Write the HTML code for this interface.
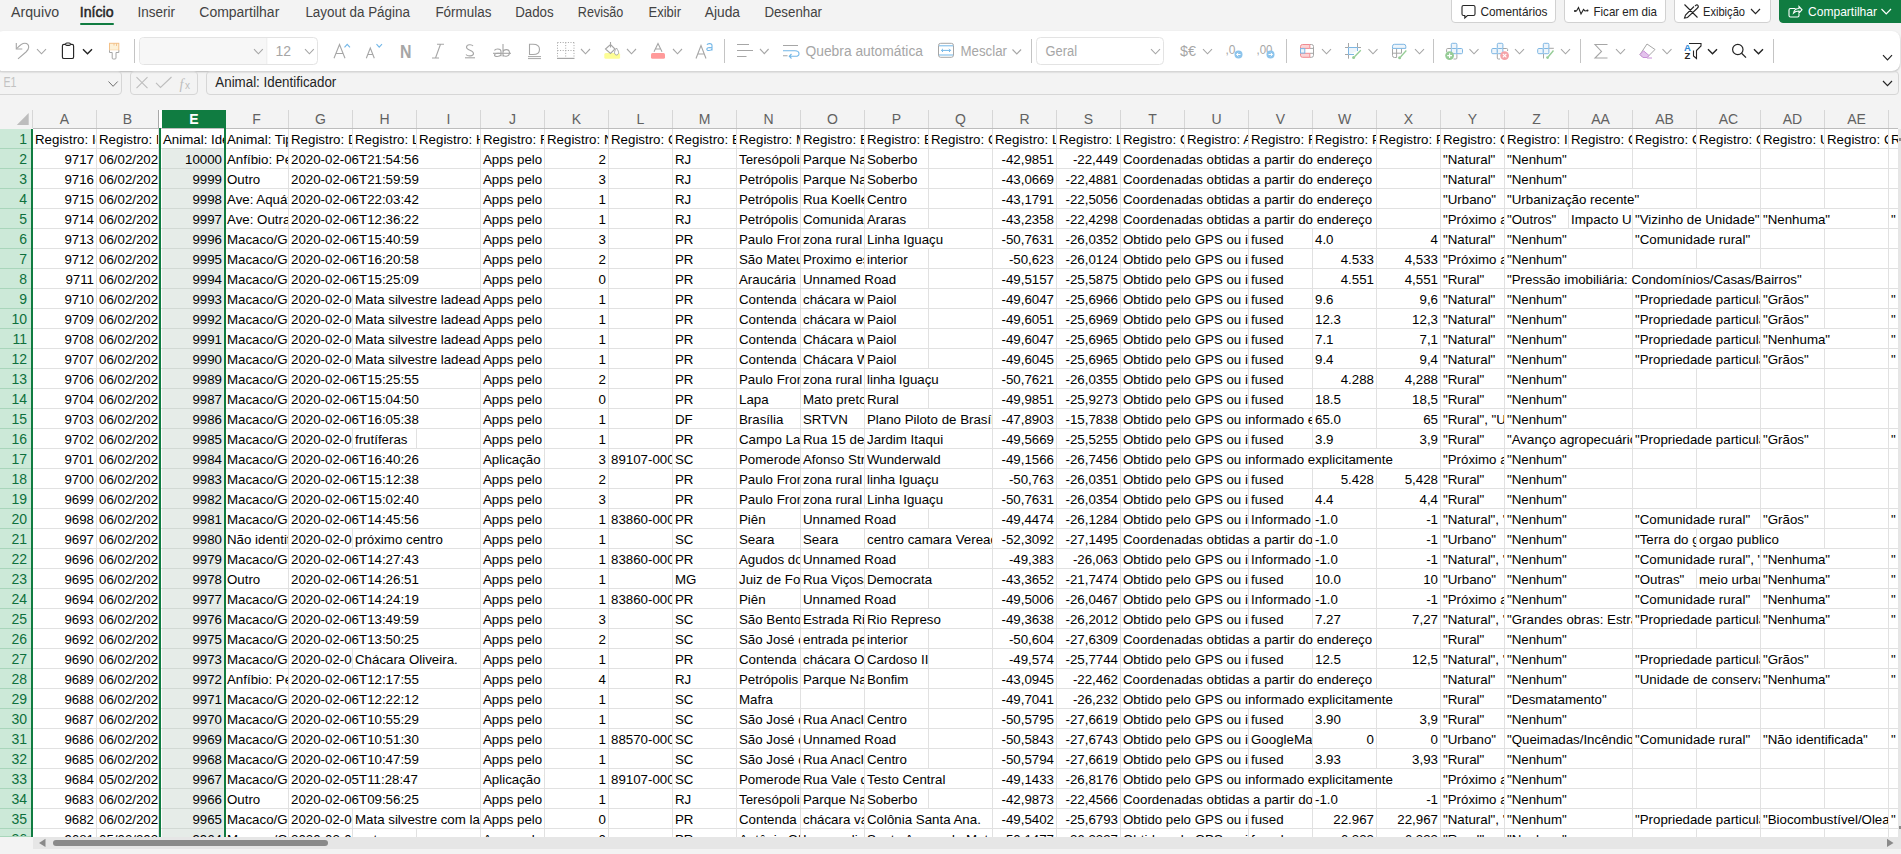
<!DOCTYPE html>
<html><head><meta charset="utf-8">
<style>
*{box-sizing:border-box}
html,body{margin:0;padding:0}
body{width:1901px;height:854px;overflow:hidden;position:relative;background:#f3f3f3;font-family:"Liberation Sans",sans-serif;color:#000}
.abs{position:absolute}
.tab{position:absolute;top:3px;font-size:14px;color:#424242;line-height:18px;white-space:nowrap}
.tab.on{color:#242424;font-weight:bold;letter-spacing:-0.2px}
.uline{position:absolute;left:80px;top:23px;width:34px;height:2px;background:#107c41;border-radius:1px}
.btn{position:absolute;top:-4px;height:27px;border:1px solid #d1d1d1;border-radius:4px;background:#fff;font-size:13.5px;color:#242424;white-space:nowrap}
.btn span{position:absolute;top:7px;line-height:16px}
#tb{position:absolute;left:-5px;top:31px;width:1905px;height:40px;background:#fff;border-radius:8px;box-shadow:0 1px 2px rgba(0,0,0,.25)}
.fbox{position:absolute;border:1px solid #d6d6d6;border-radius:4px}
.hdr{position:absolute;left:0;top:110px;width:1898px;height:18px}
.ch{position:absolute;top:110px;height:18px;line-height:18px;text-align:center;font-size:14px;color:#616161;border-right:1px solid #d6d6d6}
.ch.sel{background:#107c41;color:#fff;font-weight:bold;border-right:0}
.hline{position:absolute;left:33px;top:128px;width:1865px;height:1px;background:#bdbdbd}
.grid{position:absolute;left:33px;top:129px;width:1865px;height:708px;background:#fff}
.hl{position:absolute;left:33px;width:1865px;height:1px;background:#e1e1e1}
.row{position:absolute;left:0;width:1898px;overflow:hidden}
.c{position:absolute;top:0;height:19px;line-height:21px;font-size:13.3px;padding-left:2px;white-space:nowrap;overflow:hidden;border-right:1px solid #e1e1e1}
.c.n{text-align:right;padding-left:0;padding-right:2px}
.c.sel{background:#e6ece8;border-right-color:#fff;box-shadow:inset 1px 0 #fff}
.rh{position:absolute;left:0;width:31px;background:#cce9d8;color:#0e703d;font-size:14px;line-height:21px;overflow:hidden;text-align:right;padding-right:4px;border-bottom:1px solid #a9d6bb}
.rhwrap{position:absolute;left:0;top:129px;width:31px;height:708px;background:#cce9d8}
.selL{position:absolute;left:159px;top:128px;width:2px;height:709px;background:#107c41}
.selR{position:absolute;left:224px;top:128px;width:2px;height:709px;background:#107c41}
.rhline{position:absolute;left:31px;top:129px;width:2px;height:708px;background:#107c41}
</style></head><body>
<div class="btn" style="left:1451px;width:105px"></div>
<div class="btn" style="left:1564px;width:102px"></div>
<div class="btn" style="left:1674px;width:97px"></div>
<div class="btn" style="left:1779px;width:126px;background:#107c41;border-color:#107c41"></div>
<div class="uline"></div>
<div id="tb"></div>
<svg class="abs" style="left:0;top:0" width="1901" height="100" viewBox="0 0 1901 100"><path d="M16.3,43 V49 H22.3" fill="none" stroke="#a6a6a6" stroke-width="1.1"/><path d="M16.8,48.5 C19.5,45.5 22,43.2 24.8,43.2 C27.2,43.2 28.7,44.8 28.7,47.3 C28.7,49.2 27.3,50.8 26,52 L18,58.8" fill="none" stroke="#a6a6a6" stroke-width="1.1"/><polyline points="37,49.2 41.5,53.800000000000004 46,49.2" fill="none" stroke="#a6a6a6" stroke-width="1.1"/><rect x="62.4" y="44.3" width="11.2" height="14.2" rx="1.6" fill="none" stroke="#242424" stroke-width="1.15"/><rect x="65.6" y="43" width="4.8" height="2.4" rx="1.2" fill="#fff" stroke="#242424" stroke-width="1.1"/><polyline points="83,49.2 87.5,53.800000000000004 92,49.2" fill="none" stroke="#242424" stroke-width="1.4"/><rect x="109.5" y="43.3" width="9.3" height="7" fill="#fdf1d8" stroke="#f3c189" stroke-width="1"/><line x1="114" y1="43.3" x2="114" y2="45.5" stroke="#f3c189" stroke-width="0.9"/><line x1="116.5" y1="43.3" x2="116.5" y2="46" stroke="#f3c189" stroke-width="0.9"/><path d="M109.5,50.3 V52.5 H112.2 V58 Q112.2,59 113.2,59 H115 Q116,59 116,58 V52.5 H118.8 V50.3" fill="#fff" stroke="#a6a6a6" stroke-width="1"/><line x1="134.5" y1="39" x2="134.5" y2="63" stroke="#c4c4c4" stroke-width="1"/><rect x="139.5" y="37.5" width="178" height="27" rx="4" fill="#fff" stroke="#e3e3e3" stroke-width="1"/><path d="M143.5,38 H266.5 V64 H143.5 Q140,64 140,60.5 V41.5 Q140,38 143.5,38 Z" fill="#f7f7f7"/><line x1="266.8" y1="38" x2="266.8" y2="64" stroke="#ebebeb"/><polyline points="254,49.2 258.4,53.800000000000004 262.8,49.2" fill="none" stroke="#a6a6a6" stroke-width="1.1"/><text x="275.5" y="56" font-size="14" fill="#a6a6a6" font-family="Liberation Sans">12</text><polyline points="305,49.2 309.4,53.800000000000004 313.8,49.2" fill="none" stroke="#a6a6a6" stroke-width="1.1"/><path d="M334,58.3 L339.5,44.5 L345,58.3 M336,53.5 H343" fill="none" stroke="#a6a6a6" stroke-width="1.1"/><polyline points="344.5,47.3 347.2,44.3 350,47.3" fill="none" stroke="#73b7e8" stroke-width="1.1"/><path d="M366.3,58.3 L370.3,48 L374.3,58.3 M367.8,54.5 H372.8" fill="none" stroke="#a6a6a6" stroke-width="1.1"/><polyline points="376.5,44.2 379.2,47.2 382,44.2" fill="none" stroke="#73b7e8" stroke-width="1.1"/><text x="400" y="58.3" font-size="19" font-weight="bold" fill="#a6a6a6" font-family="Liberation Sans" textLength="11.5" lengthAdjust="spacingAndGlyphs">N</text><path d="M437,44.3 H444 M432,58 H439 M440.5,44.3 L435.5,58" fill="none" stroke="#a6a6a6" stroke-width="1.1"/><path d="M473,46 C472,44.3 466.5,44 466.5,47.3 C466.5,50.5 473.5,50 473.5,53.5 C473.5,56.5 467.5,56.5 466,54.5" fill="none" stroke="#a6a6a6" stroke-width="1.1"/><line x1="465" y1="57.8" x2="475" y2="57.8" stroke="#a6a6a6" stroke-width="1.1"/><path d="M494.5,50.5 C495,48.5 501,48 501,51.5 V56.2 M501,53.5 C497,52.8 494.5,53.5 494.5,55 C494.5,57 499.5,57.2 501,54.8 M503,44 V56.5 M503,52 C503.5,49 509.5,48.5 509.5,52.8 C509.5,57.2 503.5,57 503,54.5" fill="none" stroke="#a6a6a6" stroke-width="1.1"/><line x1="493" y1="53.3" x2="511" y2="53.3" stroke="#a6a6a6" stroke-width="1.1"/><path d="M529.5,44.3 V54.5 H533 C537,54.5 539.5,52.5 539.5,49.4 C539.5,46.3 537,44.3 533,44.3 Z" fill="none" stroke="#a6a6a6" stroke-width="1.1"/><line x1="528" y1="56.6" x2="541" y2="56.6" stroke="#a6a6a6" stroke-width="1"/><line x1="528" y1="58.6" x2="541" y2="58.6" stroke="#a6a6a6" stroke-width="1"/><path d="M557.5,42.5 V58 M574,42.5 V58 M557.5,42.5 H574 M557.5,50.5 H574 M565.7,42.5 V58" fill="none" stroke="#a6a6a6" stroke-width="1" stroke-dasharray="1 1.6"/><line x1="557" y1="58.4" x2="574.5" y2="58.4" stroke="#a6a6a6" stroke-width="1.2"/><polyline points="581,49 585.5,53.8 590,49" fill="none" stroke="#a6a6a6" stroke-width="1.1"/><rect x="604.3" y="53" width="15.8" height="5.8" rx="1.5" fill="#fdfd96"/><path d="M610.5,42 V47.5 M605.5,49 L610.5,44.5 L615,49 L610.5,53.5 Z" fill="none" stroke="#a6a6a6" stroke-width="1.1"/><path d="M616.5,48 C615,50.5 614.5,51.5 614.5,52.6 C614.5,54 615.5,55 616.5,55 C617.5,55 618.6,54 618.6,52.6 C618.6,51.5 618,50.5 616.5,48 Z" fill="#fff" stroke="#a6a6a6" stroke-width="1"/><polyline points="627,49 631.5,53.8 636,49" fill="none" stroke="#a6a6a6" stroke-width="1.1"/><rect x="651" y="53" width="14" height="5.8" rx="1.5" fill="#ff9a9a"/><path d="M654,51.8 L658,43.5 L662,51.8 M655.3,49 H660.7" fill="none" stroke="#a6a6a6" stroke-width="1.1"/><polyline points="673,49 677.5,53.8 682,49" fill="none" stroke="#a6a6a6" stroke-width="1.1"/><path d="M696,58.5 L701,45.5 L706,58.5 M697.8,54 H704.2" fill="none" stroke="#a6a6a6" stroke-width="1.1"/><path d="M707,44.8 C707.5,43.3 712,43 712,45.5 V50.6 M712,47.8 C708.5,47.2 706.8,48 706.8,49.3 C706.8,51 710.8,51 712,49" fill="none" stroke="#73b7e8" stroke-width="1.1"/><line x1="724.5" y1="39" x2="724.5" y2="63" stroke="#c4c4c4" stroke-width="1"/><path d="M737,44.5 H749 M737,50.5 H753 M737,56.5 H746.5" fill="none" stroke="#a6a6a6" stroke-width="1.1"/><polyline points="760,49 764.3,53.6 768.6,49" fill="none" stroke="#a6a6a6" stroke-width="1.1"/><path d="M783,45.5 H798 M783,55.7 H787.5" fill="none" stroke="#a6a6a6" stroke-width="1.1"/><path d="M783,50.7 H795 C797.5,50.7 799,52 799,53.7 C799,55.5 797.5,56.3 795.5,56.3 H789.5 M791.5,54 L789.3,56.3 L791.5,58.5" fill="none" stroke="#73b7e8" stroke-width="1.1"/><text x="805.5" y="55.7" font-size="14" fill="#a6a6a6" font-family="Liberation Sans" textLength="117.5" lengthAdjust="spacingAndGlyphs">Quebra automática</text><rect x="938.5" y="43.3" width="15" height="14" rx="2.2" fill="none" stroke="#a6a6a6" stroke-width="1"/><path d="M939,45.8 H953 M939,55 H953 M941.5,50.4 H950.5 M943,48.8 L941.4,50.4 L943,52 M949,48.8 L950.6,50.4 L949,52" fill="none" stroke="#73b7e8" stroke-width="1"/><text x="960.5" y="55.7" font-size="14" fill="#a6a6a6" font-family="Liberation Sans" textLength="46.5" lengthAdjust="spacingAndGlyphs">Mesclar</text><polyline points="1012.5,49.5 1016.8,53.9 1021.1,49.5" fill="none" stroke="#a6a6a6" stroke-width="1.1"/><line x1="1031.5" y1="39" x2="1031.5" y2="63" stroke="#c4c4c4" stroke-width="1"/><rect x="1036.5" y="37.5" width="127" height="27" rx="4" fill="#fff" stroke="#e3e3e3" stroke-width="1"/><text x="1045.5" y="56" font-size="14" fill="#a6a6a6" font-family="Liberation Sans" textLength="31.5" lengthAdjust="spacingAndGlyphs">Geral</text><polyline points="1151,49.2 1155.5,53.800000000000004 1160,49.2" fill="none" stroke="#a6a6a6" stroke-width="1.1"/><text x="1180" y="56" font-size="14" fill="#a6a6a6" font-family="Liberation Sans" textLength="16" lengthAdjust="spacingAndGlyphs">$€</text><polyline points="1203,49.2 1207.5,53.800000000000004 1212,49.2" fill="none" stroke="#a6a6a6" stroke-width="1.1"/><text x="1225.5" y="53.5" font-size="12" fill="#a6a6a6" font-family="Liberation Sans">,0</text><circle cx="1238.5" cy="54.5" r="4" fill="#8cc4ec"/><path d="M1240.5,54.5 H1236.6 M1238.3,52.8 L1236.6,54.5 L1238.3,56.2" fill="none" stroke="#fff" stroke-width="1"/><text x="1256.5" y="53.5" font-size="12" fill="#a6a6a6" font-family="Liberation Sans" textLength="16" lengthAdjust="spacingAndGlyphs">,00</text><circle cx="1270.5" cy="54.5" r="4" fill="#8cc4ec"/><path d="M1268.5,54.5 H1272.4 M1270.7,52.8 L1272.4,54.5 L1270.7,56.2" fill="none" stroke="#fff" stroke-width="1"/><line x1="1286.5" y1="39" x2="1286.5" y2="63" stroke="#c4c4c4" stroke-width="1"/><path d="M1309.8,44.5 H1311.5 Q1313.5,44.5 1313.5,46.5 V55.3 Q1313.5,57.3 1311.5,57.3 H1309.8 M1309.8,48.4 H1313.5 M1309.8,53.3 H1313.5" fill="none" stroke="#a6a6a6" stroke-width="1"/><path d="M1302.5,44.5 H1309.8 V48.4 H1300.5 V46.5 Q1300.5,44.5 1302.5,44.5 Z" fill="#fbd3d5" stroke="#f08a90" stroke-width="1"/><path d="M1302.5,57.3 H1309.8 V53.3 H1300.5 V55.3 Q1300.5,57.3 1302.5,57.3 Z" fill="#fbd3d5" stroke="#f08a90" stroke-width="1"/><rect x="1300.5" y="48.6" width="4.3" height="4.5" fill="#eef5fb" stroke="#7db6e3" stroke-width="1"/><polyline points="1322,49.2 1326.5,53.800000000000004 1331,49.2" fill="none" stroke="#a6a6a6" stroke-width="1.1"/><path d="M1345,47.5 H1348.5 M1357.5,47.5 H1361 M1345,54.5 H1348.5 M1348.5,43 V47.5 M1348.5,54.5 V58.7 M1357.5,43 V47.5" fill="none" stroke="#a6a6a6" stroke-width="1"/><path d="M1348.5,54.5 V47.5 H1357.5 V51" fill="#eef5fb" stroke="#7db6e3" stroke-width="1"/><path d="M1348.5,54.5 H1354" stroke="#7db6e3" stroke-width="1"/><path d="M1360.8,50.3 L1354.5,56.8" stroke="#96cc96" stroke-width="1.3"/><circle cx="1353.6" cy="57.6" r="1.5" fill="#96cc96"/><polyline points="1368.5,49.2 1373.0,53.800000000000004 1377.5,49.2" fill="none" stroke="#a6a6a6" stroke-width="1.1"/><path d="M1392.5,48.4 V55.5 Q1392.5,57.5 1394.5,57.5 H1396.6 M1392.5,53.2 H1401.5 M1396.6,48.4 V57.5 M1401.5,48.4 V53.2" fill="none" stroke="#a6a6a6" stroke-width="1"/><path d="M1392.5,48.4 V46.3 Q1392.5,44.3 1394.5,44.3 H1403.8 Q1405.8,44.3 1405.8,46.3 V48.4 Z" fill="#eef5fb" stroke="#7db6e3" stroke-width="1"/><path d="M1406.3,50.5 L1400.5,57" stroke="#96cc96" stroke-width="1.3"/><circle cx="1399.6" cy="57.8" r="1.5" fill="#96cc96"/><polyline points="1415,49.2 1419.5,53.800000000000004 1424,49.2" fill="none" stroke="#a6a6a6" stroke-width="1.1"/><line x1="1433.5" y1="39" x2="1433.5" y2="63" stroke="#c4c4c4" stroke-width="1"/><path d="M1451.3,48.5 H1447.6 Q1446.6,48.5 1446.6,49.5 V52 M1456.9,53.7 V58 Q1456.9,59 1455.9,59 H1453.5" fill="none" stroke="#a6a6a6" stroke-width="1"/><rect x="1451.3" y="43.3" width="5.6" height="5.2" rx="1.1" fill="#eef5fb" stroke="#7db6e3" stroke-width="1"/><rect x="1451.3" y="48.5" width="5.6" height="5.2" rx="1.1" fill="#eef5fb" stroke="#7db6e3" stroke-width="1"/><rect x="1456.9" y="48.5" width="5.6" height="5.2" rx="1.1" fill="#eef5fb" stroke="#7db6e3" stroke-width="1"/><circle cx="1449.6" cy="55.6" r="4.4" fill="#96cc96"/><path d="M1449.6,53.2 V58 M1447.2,55.6 H1452" stroke="#fff" stroke-width="1.1"/><polyline points="1469.5,49.2 1474.0,53.800000000000004 1478.5,49.2" fill="none" stroke="#a6a6a6" stroke-width="1.1"/><path d="M1502.9,48.5 H1506.6 Q1507.6,48.5 1507.6,49.5 V51 M1497.3,53.7 V58 Q1497.3,59 1498.3,59 H1500" fill="none" stroke="#a6a6a6" stroke-width="1"/><rect x="1497.3" y="43.3" width="5.6" height="5.2" rx="1.1" fill="#eef5fb" stroke="#7db6e3" stroke-width="1"/><rect x="1491.7" y="48.5" width="5.6" height="5.2" rx="1.1" fill="#eef5fb" stroke="#7db6e3" stroke-width="1"/><rect x="1497.3" y="48.5" width="5.6" height="5.2" rx="1.1" fill="#eef5fb" stroke="#7db6e3" stroke-width="1"/><circle cx="1504.6" cy="55.6" r="4.4" fill="#f4a3a8"/><path d="M1502.8,53.8 L1506.4,57.4 M1506.4,53.8 L1502.8,57.4" stroke="#fff" stroke-width="1.1"/><polyline points="1515,49.2 1519.5,53.800000000000004 1524,49.2" fill="none" stroke="#a6a6a6" stroke-width="1.1"/><path d="M1548.9,48.3 H1553.8 M1543.5,53.7 V58.5" fill="none" stroke="#a6a6a6" stroke-width="1"/><rect x="1543.3" y="43.3" width="5.6" height="5.2" rx="1.1" fill="#eef5fb" stroke="#7db6e3" stroke-width="1"/><rect x="1537.7" y="48.5" width="5.6" height="5.2" rx="1.1" fill="#eef5fb" stroke="#7db6e3" stroke-width="1"/><rect x="1543.3" y="48.5" width="5.6" height="5.2" rx="1.1" fill="#eef5fb" stroke="#7db6e3" stroke-width="1"/><path d="M1553.5,50.5 L1548.3,56.8" stroke="#96cc96" stroke-width="1.4"/><circle cx="1547.6" cy="57.6" r="1.4" fill="#96cc96"/><polyline points="1561,49.2 1565.5,53.800000000000004 1570,49.2" fill="none" stroke="#a6a6a6" stroke-width="1.1"/><line x1="1580.5" y1="39" x2="1580.5" y2="63" stroke="#c4c4c4" stroke-width="1"/><path d="M1607.5,44.5 H1595 L1601.5,51.5 L1595,58 H1607.5" fill="none" stroke="#a6a6a6" stroke-width="1.1"/><polyline points="1616,49.2 1620.5,53.800000000000004 1625,49.2" fill="none" stroke="#a6a6a6" stroke-width="1.1"/><path d="M1647,44 L1655,49.5 L1647,57.5 H1643 L1640,54.5 Z" fill="#fff" stroke="#a6a6a6" stroke-width="1"/><path d="M1640,54.5 L1643.5,50.8 L1649,55.5 L1647,57.5 H1643 Z" fill="#e3c3ec" stroke="#c98fd8" stroke-width="1"/><line x1="1647" y1="58" x2="1652" y2="58" stroke="#c98fd8" stroke-width="1"/><polyline points="1662.5,49.2 1667.0,53.800000000000004 1671.5,49.2" fill="none" stroke="#a6a6a6" stroke-width="1.1"/><text x="1684" y="51" font-size="9.5" fill="#2b88d8" font-family="Liberation Sans" font-weight="bold">A</text><text x="1684.5" y="59" font-size="9.5" fill="#242424" font-family="Liberation Sans" font-weight="bold">Z</text><path d="M1689,43.5 H1701 V46 L1696.5,50.5 V58.5 L1693.5,56 V50.5" fill="none" stroke="#242424" stroke-width="1.1"/><polyline points="1708,49.2 1712.5,53.800000000000004 1717,49.2" fill="none" stroke="#242424" stroke-width="1.4"/><circle cx="1737.8" cy="49.5" r="5.2" fill="none" stroke="#242424" stroke-width="1.2"/><line x1="1741.6" y1="53.3" x2="1746" y2="57.6" stroke="#242424" stroke-width="1.3"/><polyline points="1754,49.2 1758.5,53.800000000000004 1763,49.2" fill="none" stroke="#242424" stroke-width="1.4"/><line x1="1773.5" y1="39" x2="1773.5" y2="63" stroke="#c4c4c4" stroke-width="1"/><polyline points="1883,55.2 1887.5,59.800000000000004 1892,55.2" fill="none" stroke="#242424" stroke-width="1.2"/><polyline points="108.5,81.5 113.1,86.3 117.7,81.5" fill="none" stroke="#707070" stroke-width="1.0"/><path d="M136.5,77.2 L147.5,88.2 M147.5,77.2 L136.5,88.2" stroke="#bdbdbd" stroke-width="1.1"/><path d="M156,82.8 L160.5,87.5 L171.5,77" fill="none" stroke="#bdbdbd" stroke-width="1.1"/><text x="179.5" y="88.5" font-size="14" fill="#bdbdbd" font-family="Liberation Serif" font-style="italic">f</text><text x="185" y="89" font-size="10" fill="#bdbdbd" font-family="Liberation Sans">x</text><polyline points="1883,81 1887.5,85.6 1892,81" fill="none" stroke="#242424" stroke-width="1.2"/><path d="M1463.5,5.5 H1473.5 Q1475,5.5 1475,7 V14 Q1475,15.5 1473.5,15.5 H1467.5 L1464.8,18 V15.5 H1463.5 Q1462,15.5 1462,14 V7 Q1462,5.5 1463.5,5.5 Z" fill="none" stroke="#242424" stroke-width="1.1"/><path d="M1574.5,11 L1576.5,11 L1578.5,7.5 L1581,14 L1583.5,9.5 L1585,11 L1588,10.5" fill="none" stroke="#242424" stroke-width="1.1"/><circle cx="1575" cy="11" r="1" fill="#242424"/><circle cx="1587.5" cy="10.6" r="1" fill="#242424"/><path d="M1684.5,4.5 L1697.5,17.5 M1695,6 Q1697,4 1698,5.5 Q1699,7 1697,8.5 L1687.5,17.5 L1684.5,18 L1685.5,15 L1694,6.5" fill="none" stroke="#242424" stroke-width="1.1"/><polyline points="1751,9 1755.5,13.6 1760,9" fill="none" stroke="#242424" stroke-width="1.2"/><path d="M1795.5,8.5 H1790.5 Q1789,8.5 1789,10 V15.5 Q1789,17 1790.5,17 H1797.5 Q1799,17 1799,15.5 V14 M1793.5,13 Q1794.5,8.5 1799,8.5 V6.5 L1802,9.8 L1799,13 V11 Q1795.5,11 1793.5,13 Z" fill="none" stroke="#fff" stroke-width="1.1"/><polyline points="1881.5,9 1886.25,13.8 1891.0,9" fill="none" stroke="#fff" stroke-width="1.2"/><text x="11.1" y="16.5" font-size="14" fill="#424242" font-family="Liberation Sans" textLength="48" lengthAdjust="spacingAndGlyphs">Arquivo</text><text x="137.4" y="16.5" font-size="14" fill="#424242" font-family="Liberation Sans" textLength="37.5" lengthAdjust="spacingAndGlyphs">Inserir</text><text x="199.3" y="16.5" font-size="14" fill="#424242" font-family="Liberation Sans" textLength="80" lengthAdjust="spacingAndGlyphs">Compartilhar</text><text x="305.4" y="16.5" font-size="14" fill="#424242" font-family="Liberation Sans" textLength="104.6" lengthAdjust="spacingAndGlyphs">Layout da Página</text><text x="435.4" y="16.5" font-size="14" fill="#424242" font-family="Liberation Sans" textLength="56" lengthAdjust="spacingAndGlyphs">Fórmulas</text><text x="515.2" y="16.5" font-size="14" fill="#424242" font-family="Liberation Sans" textLength="38.5" lengthAdjust="spacingAndGlyphs">Dados</text><text x="577.8" y="16.5" font-size="14" fill="#424242" font-family="Liberation Sans" textLength="45.6" lengthAdjust="spacingAndGlyphs">Revisão</text><text x="648.5" y="16.5" font-size="14" fill="#424242" font-family="Liberation Sans" textLength="32.5" lengthAdjust="spacingAndGlyphs">Exibir</text><text x="704.8" y="16.5" font-size="14" fill="#424242" font-family="Liberation Sans" textLength="35.2" lengthAdjust="spacingAndGlyphs">Ajuda</text><text x="764.4" y="16.5" font-size="14" fill="#424242" font-family="Liberation Sans" textLength="57.6" lengthAdjust="spacingAndGlyphs">Desenhar</text><text x="79.8" y="16.5" font-size="14" fill="#242424" font-family="Liberation Sans" textLength="33.8" lengthAdjust="spacingAndGlyphs" stroke="#242424" stroke-width="0.45">Início</text><text x="1480.5" y="15.8" font-size="13" fill="#242424" font-family="Liberation Sans" textLength="67" lengthAdjust="spacingAndGlyphs">Comentários</text><text x="1593.5" y="15.8" font-size="13" fill="#242424" font-family="Liberation Sans" textLength="63.5" lengthAdjust="spacingAndGlyphs">Ficar em dia</text><text x="1703" y="15.8" font-size="13" fill="#242424" font-family="Liberation Sans" textLength="42" lengthAdjust="spacingAndGlyphs">Exibição</text><text x="1808" y="15.8" font-size="13" fill="#ffffff" font-family="Liberation Sans" textLength="69" lengthAdjust="spacingAndGlyphs">Compartilhar</text><text x="215.3" y="87.2" font-size="14" fill="#242424" font-family="Liberation Sans" textLength="121" lengthAdjust="spacingAndGlyphs">Animal: Identificador</text><text x="3.5" y="87.2" font-size="14" fill="#c2c2c2" font-family="Liberation Sans" textLength="13" lengthAdjust="spacingAndGlyphs">E1</text></svg>

<!-- formula bar -->
<div class="fbox" style="left:-4px;top:71px;width:126px;height:24px"></div>
<div class="fbox" style="left:130px;top:71px;width:68px;height:24px"></div>
<div class="fbox" style="left:206px;top:71px;width:1693px;height:24px"></div>

<!-- col headers -->
<div class="ch" style="left:33px;width:64px">A</div>
<div class="ch" style="left:97px;width:62px">B</div>
<div class="ch sel" style="left:162px;width:64px">E</div>
<div class="ch" style="left:225px;width:64px">F</div>
<div class="ch" style="left:289px;width:64px">G</div>
<div class="ch" style="left:353px;width:64px">H</div>
<div class="ch" style="left:417px;width:64px">I</div>
<div class="ch" style="left:481px;width:64px">J</div>
<div class="ch" style="left:545px;width:64px">K</div>
<div class="ch" style="left:609px;width:64px">L</div>
<div class="ch" style="left:673px;width:64px">M</div>
<div class="ch" style="left:737px;width:64px">N</div>
<div class="ch" style="left:801px;width:64px">O</div>
<div class="ch" style="left:865px;width:64px">P</div>
<div class="ch" style="left:929px;width:64px">Q</div>
<div class="ch" style="left:993px;width:64px">R</div>
<div class="ch" style="left:1057px;width:64px">S</div>
<div class="ch" style="left:1121px;width:64px">T</div>
<div class="ch" style="left:1185px;width:64px">U</div>
<div class="ch" style="left:1249px;width:64px">V</div>
<div class="ch" style="left:1313px;width:64px">W</div>
<div class="ch" style="left:1377px;width:64px">X</div>
<div class="ch" style="left:1441px;width:64px">Y</div>
<div class="ch" style="left:1505px;width:64px">Z</div>
<div class="ch" style="left:1569px;width:64px">AA</div>
<div class="ch" style="left:1633px;width:64px">AB</div>
<div class="ch" style="left:1697px;width:64px">AC</div>
<div class="ch" style="left:1761px;width:64px">AD</div>
<div class="ch" style="left:1825px;width:64px">AE</div>
<div class="ch" style="left:1889px;width:9px;border-right:0"></div>
<div class="hline"></div>
<div class="grid"></div>
<div class="hl" style="top:148px"></div>
<div class="hl" style="top:168px"></div>
<div class="hl" style="top:188px"></div>
<div class="hl" style="top:208px"></div>
<div class="hl" style="top:228px"></div>
<div class="hl" style="top:248px"></div>
<div class="hl" style="top:268px"></div>
<div class="hl" style="top:288px"></div>
<div class="hl" style="top:308px"></div>
<div class="hl" style="top:328px"></div>
<div class="hl" style="top:348px"></div>
<div class="hl" style="top:368px"></div>
<div class="hl" style="top:388px"></div>
<div class="hl" style="top:408px"></div>
<div class="hl" style="top:428px"></div>
<div class="hl" style="top:448px"></div>
<div class="hl" style="top:468px"></div>
<div class="hl" style="top:488px"></div>
<div class="hl" style="top:508px"></div>
<div class="hl" style="top:528px"></div>
<div class="hl" style="top:548px"></div>
<div class="hl" style="top:568px"></div>
<div class="hl" style="top:588px"></div>
<div class="hl" style="top:608px"></div>
<div class="hl" style="top:628px"></div>
<div class="hl" style="top:648px"></div>
<div class="hl" style="top:668px"></div>
<div class="hl" style="top:688px"></div>
<div class="hl" style="top:708px"></div>
<div class="hl" style="top:728px"></div>
<div class="hl" style="top:748px"></div>
<div class="hl" style="top:768px"></div>
<div class="hl" style="top:788px"></div>
<div class="hl" style="top:808px"></div>
<div class="hl" style="top:828px"></div>
<div class="row" style="top:129px;height:19px"><div class="c" style="left:33px;width:64px">Registro: Identificador</div><div class="c" style="left:97px;width:62px">Registro: Data</div><div class="c" style="left:161px;width:64px">Animal: Identificador</div><div class="c" style="left:225px;width:64px">Animal: Tipo</div><div class="c" style="left:289px;width:64px">Registro: Data e Hora</div><div class="c" style="left:353px;width:64px">Registro: Local</div><div class="c" style="left:417px;width:64px">Registro: Horário</div><div class="c" style="left:481px;width:64px">Registro: Fonte</div><div class="c" style="left:545px;width:64px">Registro: Número</div><div class="c" style="left:609px;width:64px">Registro: CEP</div><div class="c" style="left:673px;width:64px">Registro: Estado</div><div class="c" style="left:737px;width:64px">Registro: Município</div><div class="c" style="left:801px;width:64px">Registro: Endereço</div><div class="c" style="left:865px;width:64px">Registro: Bairro</div><div class="c" style="left:929px;width:64px">Registro: Complemento</div><div class="c" style="left:993px;width:64px">Registro: Longitude</div><div class="c" style="left:1057px;width:64px">Registro: Latitude</div><div class="c" style="left:1121px;width:64px">Registro: Coordenadas</div><div class="c" style="left:1185px;width:64px">Registro: Acurácia</div><div class="c" style="left:1249px;width:64px">Registro: Fornecedor</div><div class="c" style="left:1313px;width:64px">Registro: Precisão</div><div class="c" style="left:1377px;width:64px">Registro: Precisão</div><div class="c" style="left:1441px;width:64px">Registro: Contexto</div><div class="c" style="left:1505px;width:64px">Registro: Impacto</div><div class="c" style="left:1569px;width:64px">Registro: Complemento</div><div class="c" style="left:1633px;width:64px">Registro: Contexto</div><div class="c" style="left:1697px;width:64px">Registro: Contexto</div><div class="c" style="left:1761px;width:64px">Registro: Uso</div><div class="c" style="left:1825px;width:64px">Registro: Complemento</div><div class="c" style="left:1889px;width:9px;border-right:0">Registro</div></div>
<div class="row" style="top:149px;height:19px"><div class="c n" style="left:33px;width:64px">9717</div><div class="c" style="left:97px;width:62px">06/02/2020</div><div class="c n sel" style="left:161px;width:64px">10000</div><div class="c" style="left:225px;width:64px">Anfíbio: Perereca</div><div class="c" style="left:289px;width:192px">2020-02-06T21:54:56</div><div class="c" style="left:481px;width:64px">Apps pelo celular</div><div class="c n" style="left:545px;width:64px">2</div><div class="c" style="left:609px;width:64px"></div><div class="c" style="left:673px;width:64px">RJ</div><div class="c" style="left:737px;width:64px">Teresópolis</div><div class="c" style="left:801px;width:64px">Parque Nacional</div><div class="c" style="left:865px;width:64px">Soberbo</div><div class="c" style="left:929px;width:64px"></div><div class="c n" style="left:993px;width:64px">-42,9851</div><div class="c n" style="left:1057px;width:64px">-22,449</div><div class="c" style="left:1121px;width:256px">Coordenadas obtidas a partir do endereço</div><div class="c" style="left:1377px;width:64px"></div><div class="c" style="left:1441px;width:64px">"Natural"</div><div class="c" style="left:1505px;width:128px">"Nenhum"</div><div class="c" style="left:1633px;width:64px"></div><div class="c" style="left:1697px;width:64px"></div><div class="c" style="left:1761px;width:64px"></div><div class="c" style="left:1825px;width:64px"></div><div class="c" style="left:1889px;width:9px;border-right:0"></div></div>
<div class="row" style="top:169px;height:19px"><div class="c n" style="left:33px;width:64px">9716</div><div class="c" style="left:97px;width:62px">06/02/2020</div><div class="c n sel" style="left:161px;width:64px">9999</div><div class="c" style="left:225px;width:64px">Outro</div><div class="c" style="left:289px;width:192px">2020-02-06T21:59:59</div><div class="c" style="left:481px;width:64px">Apps pelo celular</div><div class="c n" style="left:545px;width:64px">3</div><div class="c" style="left:609px;width:64px"></div><div class="c" style="left:673px;width:64px">RJ</div><div class="c" style="left:737px;width:64px">Petrópolis</div><div class="c" style="left:801px;width:64px">Parque Nacional</div><div class="c" style="left:865px;width:64px">Soberbo</div><div class="c" style="left:929px;width:64px"></div><div class="c n" style="left:993px;width:64px">-43,0669</div><div class="c n" style="left:1057px;width:64px">-22,4881</div><div class="c" style="left:1121px;width:256px">Coordenadas obtidas a partir do endereço</div><div class="c" style="left:1377px;width:64px"></div><div class="c" style="left:1441px;width:64px">"Natural"</div><div class="c" style="left:1505px;width:128px">"Nenhum"</div><div class="c" style="left:1633px;width:64px"></div><div class="c" style="left:1697px;width:64px"></div><div class="c" style="left:1761px;width:64px"></div><div class="c" style="left:1825px;width:64px"></div><div class="c" style="left:1889px;width:9px;border-right:0"></div></div>
<div class="row" style="top:189px;height:19px"><div class="c n" style="left:33px;width:64px">9715</div><div class="c" style="left:97px;width:62px">06/02/2020</div><div class="c n sel" style="left:161px;width:64px">9998</div><div class="c" style="left:225px;width:64px">Ave: Aquática</div><div class="c" style="left:289px;width:192px">2020-02-06T22:03:42</div><div class="c" style="left:481px;width:64px">Apps pelo celular</div><div class="c n" style="left:545px;width:64px">1</div><div class="c" style="left:609px;width:64px"></div><div class="c" style="left:673px;width:64px">RJ</div><div class="c" style="left:737px;width:64px">Petrópolis</div><div class="c" style="left:801px;width:64px">Rua Koeller</div><div class="c" style="left:865px;width:64px">Centro</div><div class="c" style="left:929px;width:64px"></div><div class="c n" style="left:993px;width:64px">-43,1791</div><div class="c n" style="left:1057px;width:64px">-22,5056</div><div class="c" style="left:1121px;width:256px">Coordenadas obtidas a partir do endereço</div><div class="c" style="left:1377px;width:64px"></div><div class="c" style="left:1441px;width:64px">"Urbano"</div><div class="c" style="left:1505px;width:192px">"Urbanização recente"</div><div class="c" style="left:1697px;width:64px"></div><div class="c" style="left:1761px;width:64px"></div><div class="c" style="left:1825px;width:64px"></div><div class="c" style="left:1889px;width:9px;border-right:0"></div></div>
<div class="row" style="top:209px;height:19px"><div class="c n" style="left:33px;width:64px">9714</div><div class="c" style="left:97px;width:62px">06/02/2020</div><div class="c n sel" style="left:161px;width:64px">9997</div><div class="c" style="left:225px;width:64px">Ave: Outras</div><div class="c" style="left:289px;width:192px">2020-02-06T12:36:22</div><div class="c" style="left:481px;width:64px">Apps pelo celular</div><div class="c n" style="left:545px;width:64px">1</div><div class="c" style="left:609px;width:64px"></div><div class="c" style="left:673px;width:64px">RJ</div><div class="c" style="left:737px;width:64px">Petrópolis</div><div class="c" style="left:801px;width:64px">Comunidade</div><div class="c" style="left:865px;width:64px">Araras</div><div class="c" style="left:929px;width:64px"></div><div class="c n" style="left:993px;width:64px">-43,2358</div><div class="c n" style="left:1057px;width:64px">-22,4298</div><div class="c" style="left:1121px;width:256px">Coordenadas obtidas a partir do endereço</div><div class="c" style="left:1377px;width:64px"></div><div class="c" style="left:1441px;width:64px">"Próximo a Unidade"</div><div class="c" style="left:1505px;width:64px">"Outros"</div><div class="c" style="left:1569px;width:64px">Impacto Urbano</div><div class="c" style="left:1633px;width:128px">"Vizinho de Unidade"</div><div class="c" style="left:1761px;width:128px">"Nenhuma"</div><div class="c" style="left:1889px;width:9px;border-right:0">"</div></div>
<div class="row" style="top:229px;height:19px"><div class="c n" style="left:33px;width:64px">9713</div><div class="c" style="left:97px;width:62px">06/02/2020</div><div class="c n sel" style="left:161px;width:64px">9996</div><div class="c" style="left:225px;width:64px">Macaco/Gorila</div><div class="c" style="left:289px;width:192px">2020-02-06T15:40:59</div><div class="c" style="left:481px;width:64px">Apps pelo celular</div><div class="c n" style="left:545px;width:64px">3</div><div class="c" style="left:609px;width:64px"></div><div class="c" style="left:673px;width:64px">PR</div><div class="c" style="left:737px;width:64px">Paulo Frontin</div><div class="c" style="left:801px;width:64px">zona rural</div><div class="c" style="left:865px;width:128px">Linha Iguaçu</div><div class="c n" style="left:993px;width:64px">-50,7631</div><div class="c n" style="left:1057px;width:64px">-26,0352</div><div class="c" style="left:1121px;width:128px">Obtido pelo GPS ou informado explicitamente</div><div class="c" style="left:1249px;width:64px">fused</div><div class="c" style="left:1313px;width:64px">4.0</div><div class="c n" style="left:1377px;width:64px">4</div><div class="c" style="left:1441px;width:64px">"Natural"</div><div class="c" style="left:1505px;width:128px">"Nenhum"</div><div class="c" style="left:1633px;width:128px">"Comunidade rural"</div><div class="c" style="left:1761px;width:64px"></div><div class="c" style="left:1825px;width:64px"></div><div class="c" style="left:1889px;width:9px;border-right:0"></div></div>
<div class="row" style="top:249px;height:19px"><div class="c n" style="left:33px;width:64px">9712</div><div class="c" style="left:97px;width:62px">06/02/2020</div><div class="c n sel" style="left:161px;width:64px">9995</div><div class="c" style="left:225px;width:64px">Macaco/Gorila</div><div class="c" style="left:289px;width:192px">2020-02-06T16:20:58</div><div class="c" style="left:481px;width:64px">Apps pelo celular</div><div class="c n" style="left:545px;width:64px">2</div><div class="c" style="left:609px;width:64px"></div><div class="c" style="left:673px;width:64px">PR</div><div class="c" style="left:737px;width:64px">São Mateus do Sul</div><div class="c" style="left:801px;width:64px">Proximo escola</div><div class="c" style="left:865px;width:64px">interior</div><div class="c" style="left:929px;width:64px"></div><div class="c n" style="left:993px;width:64px">-50,623</div><div class="c n" style="left:1057px;width:64px">-26,0124</div><div class="c" style="left:1121px;width:128px">Obtido pelo GPS ou informado explicitamente</div><div class="c" style="left:1249px;width:64px">fused</div><div class="c n" style="left:1313px;width:64px">4.533</div><div class="c n" style="left:1377px;width:64px">4,533</div><div class="c" style="left:1441px;width:64px">"Próximo a Unidade"</div><div class="c" style="left:1505px;width:128px">"Nenhum"</div><div class="c" style="left:1633px;width:64px"></div><div class="c" style="left:1697px;width:64px"></div><div class="c" style="left:1761px;width:64px"></div><div class="c" style="left:1825px;width:64px"></div><div class="c" style="left:1889px;width:9px;border-right:0"></div></div>
<div class="row" style="top:269px;height:19px"><div class="c n" style="left:33px;width:64px">9711</div><div class="c" style="left:97px;width:62px">06/02/2020</div><div class="c n sel" style="left:161px;width:64px">9994</div><div class="c" style="left:225px;width:64px">Macaco/Gorila</div><div class="c" style="left:289px;width:192px">2020-02-06T15:25:09</div><div class="c" style="left:481px;width:64px">Apps pelo celular</div><div class="c n" style="left:545px;width:64px">0</div><div class="c" style="left:609px;width:64px"></div><div class="c" style="left:673px;width:64px">PR</div><div class="c" style="left:737px;width:64px">Araucária</div><div class="c" style="left:801px;width:128px">Unnamed Road</div><div class="c" style="left:929px;width:64px"></div><div class="c n" style="left:993px;width:64px">-49,5157</div><div class="c n" style="left:1057px;width:64px">-25,5875</div><div class="c" style="left:1121px;width:128px">Obtido pelo GPS ou informado explicitamente</div><div class="c" style="left:1249px;width:64px">fused</div><div class="c n" style="left:1313px;width:64px">4.551</div><div class="c n" style="left:1377px;width:64px">4,551</div><div class="c" style="left:1441px;width:64px">"Rural"</div><div class="c" style="left:1505px;width:320px">"Pressão imobiliária: Condomínios/Casas/Bairros"</div><div class="c" style="left:1825px;width:64px"></div><div class="c" style="left:1889px;width:9px;border-right:0"></div></div>
<div class="row" style="top:289px;height:19px"><div class="c n" style="left:33px;width:64px">9710</div><div class="c" style="left:97px;width:62px">06/02/2020</div><div class="c n sel" style="left:161px;width:64px">9993</div><div class="c" style="left:225px;width:64px">Macaco/Gorila</div><div class="c" style="left:289px;width:64px">2020-02-06T12:00:00</div><div class="c" style="left:353px;width:128px">Mata silvestre ladeada por</div><div class="c" style="left:481px;width:64px">Apps pelo celular</div><div class="c n" style="left:545px;width:64px">1</div><div class="c" style="left:609px;width:64px"></div><div class="c" style="left:673px;width:64px">PR</div><div class="c" style="left:737px;width:64px">Contenda</div><div class="c" style="left:801px;width:64px">chácara wolf</div><div class="c" style="left:865px;width:64px">Paiol</div><div class="c" style="left:929px;width:64px"></div><div class="c n" style="left:993px;width:64px">-49,6047</div><div class="c n" style="left:1057px;width:64px">-25,6966</div><div class="c" style="left:1121px;width:128px">Obtido pelo GPS ou informado explicitamente</div><div class="c" style="left:1249px;width:64px">fused</div><div class="c" style="left:1313px;width:64px">9.6</div><div class="c n" style="left:1377px;width:64px">9,6</div><div class="c" style="left:1441px;width:64px">"Natural"</div><div class="c" style="left:1505px;width:128px">"Nenhum"</div><div class="c" style="left:1633px;width:128px">"Propriedade particular"</div><div class="c" style="left:1761px;width:64px">"Grãos"</div><div class="c" style="left:1825px;width:64px"></div><div class="c" style="left:1889px;width:9px;border-right:0">"</div></div>
<div class="row" style="top:309px;height:19px"><div class="c n" style="left:33px;width:64px">9709</div><div class="c" style="left:97px;width:62px">06/02/2020</div><div class="c n sel" style="left:161px;width:64px">9992</div><div class="c" style="left:225px;width:64px">Macaco/Gorila</div><div class="c" style="left:289px;width:64px">2020-02-06T12:00:00</div><div class="c" style="left:353px;width:128px">Mata silvestre ladeada por</div><div class="c" style="left:481px;width:64px">Apps pelo celular</div><div class="c n" style="left:545px;width:64px">1</div><div class="c" style="left:609px;width:64px"></div><div class="c" style="left:673px;width:64px">PR</div><div class="c" style="left:737px;width:64px">Contenda</div><div class="c" style="left:801px;width:64px">chácara wolf</div><div class="c" style="left:865px;width:64px">Paiol</div><div class="c" style="left:929px;width:64px"></div><div class="c n" style="left:993px;width:64px">-49,6051</div><div class="c n" style="left:1057px;width:64px">-25,6969</div><div class="c" style="left:1121px;width:128px">Obtido pelo GPS ou informado explicitamente</div><div class="c" style="left:1249px;width:64px">fused</div><div class="c" style="left:1313px;width:64px">12.3</div><div class="c n" style="left:1377px;width:64px">12,3</div><div class="c" style="left:1441px;width:64px">"Natural"</div><div class="c" style="left:1505px;width:128px">"Nenhum"</div><div class="c" style="left:1633px;width:128px">"Propriedade particular"</div><div class="c" style="left:1761px;width:64px">"Grãos"</div><div class="c" style="left:1825px;width:64px"></div><div class="c" style="left:1889px;width:9px;border-right:0">"</div></div>
<div class="row" style="top:329px;height:19px"><div class="c n" style="left:33px;width:64px">9708</div><div class="c" style="left:97px;width:62px">06/02/2020</div><div class="c n sel" style="left:161px;width:64px">9991</div><div class="c" style="left:225px;width:64px">Macaco/Gorila</div><div class="c" style="left:289px;width:64px">2020-02-06T12:00:00</div><div class="c" style="left:353px;width:128px">Mata silvestre ladeada por</div><div class="c" style="left:481px;width:64px">Apps pelo celular</div><div class="c n" style="left:545px;width:64px">1</div><div class="c" style="left:609px;width:64px"></div><div class="c" style="left:673px;width:64px">PR</div><div class="c" style="left:737px;width:64px">Contenda</div><div class="c" style="left:801px;width:64px">Chácara wolf</div><div class="c" style="left:865px;width:64px">Paiol</div><div class="c" style="left:929px;width:64px"></div><div class="c n" style="left:993px;width:64px">-49,6047</div><div class="c n" style="left:1057px;width:64px">-25,6965</div><div class="c" style="left:1121px;width:128px">Obtido pelo GPS ou informado explicitamente</div><div class="c" style="left:1249px;width:64px">fused</div><div class="c" style="left:1313px;width:64px">7.1</div><div class="c n" style="left:1377px;width:64px">7,1</div><div class="c" style="left:1441px;width:64px">"Natural"</div><div class="c" style="left:1505px;width:128px">"Nenhum"</div><div class="c" style="left:1633px;width:128px">"Propriedade particular"</div><div class="c" style="left:1761px;width:128px">"Nenhuma"</div><div class="c" style="left:1889px;width:9px;border-right:0">"</div></div>
<div class="row" style="top:349px;height:19px"><div class="c n" style="left:33px;width:64px">9707</div><div class="c" style="left:97px;width:62px">06/02/2020</div><div class="c n sel" style="left:161px;width:64px">9990</div><div class="c" style="left:225px;width:64px">Macaco/Gorila</div><div class="c" style="left:289px;width:64px">2020-02-06T12:00:00</div><div class="c" style="left:353px;width:128px">Mata silvestre ladeada por</div><div class="c" style="left:481px;width:64px">Apps pelo celular</div><div class="c n" style="left:545px;width:64px">1</div><div class="c" style="left:609px;width:64px"></div><div class="c" style="left:673px;width:64px">PR</div><div class="c" style="left:737px;width:64px">Contenda</div><div class="c" style="left:801px;width:64px">Chácara Wolf</div><div class="c" style="left:865px;width:64px">Paiol</div><div class="c" style="left:929px;width:64px"></div><div class="c n" style="left:993px;width:64px">-49,6045</div><div class="c n" style="left:1057px;width:64px">-25,6965</div><div class="c" style="left:1121px;width:128px">Obtido pelo GPS ou informado explicitamente</div><div class="c" style="left:1249px;width:64px">fused</div><div class="c" style="left:1313px;width:64px">9.4</div><div class="c n" style="left:1377px;width:64px">9,4</div><div class="c" style="left:1441px;width:64px">"Natural"</div><div class="c" style="left:1505px;width:128px">"Nenhum"</div><div class="c" style="left:1633px;width:128px">"Propriedade particular"</div><div class="c" style="left:1761px;width:64px">"Grãos"</div><div class="c" style="left:1825px;width:64px"></div><div class="c" style="left:1889px;width:9px;border-right:0">"</div></div>
<div class="row" style="top:369px;height:19px"><div class="c n" style="left:33px;width:64px">9706</div><div class="c" style="left:97px;width:62px">06/02/2020</div><div class="c n sel" style="left:161px;width:64px">9989</div><div class="c" style="left:225px;width:64px">Macaco/Gorila</div><div class="c" style="left:289px;width:192px">2020-02-06T15:25:55</div><div class="c" style="left:481px;width:64px">Apps pelo celular</div><div class="c n" style="left:545px;width:64px">2</div><div class="c" style="left:609px;width:64px"></div><div class="c" style="left:673px;width:64px">PR</div><div class="c" style="left:737px;width:64px">Paulo Frontin</div><div class="c" style="left:801px;width:64px">zona rural</div><div class="c" style="left:865px;width:128px">linha Iguaçu</div><div class="c n" style="left:993px;width:64px">-50,7621</div><div class="c n" style="left:1057px;width:64px">-26,0355</div><div class="c" style="left:1121px;width:128px">Obtido pelo GPS ou informado explicitamente</div><div class="c" style="left:1249px;width:64px">fused</div><div class="c n" style="left:1313px;width:64px">4.288</div><div class="c n" style="left:1377px;width:64px">4,288</div><div class="c" style="left:1441px;width:64px">"Rural"</div><div class="c" style="left:1505px;width:128px">"Nenhum"</div><div class="c" style="left:1633px;width:64px"></div><div class="c" style="left:1697px;width:64px"></div><div class="c" style="left:1761px;width:64px"></div><div class="c" style="left:1825px;width:64px"></div><div class="c" style="left:1889px;width:9px;border-right:0"></div></div>
<div class="row" style="top:389px;height:19px"><div class="c n" style="left:33px;width:64px">9704</div><div class="c" style="left:97px;width:62px">06/02/2020</div><div class="c n sel" style="left:161px;width:64px">9987</div><div class="c" style="left:225px;width:64px">Macaco/Gorila</div><div class="c" style="left:289px;width:192px">2020-02-06T15:04:50</div><div class="c" style="left:481px;width:64px">Apps pelo celular</div><div class="c n" style="left:545px;width:64px">0</div><div class="c" style="left:609px;width:64px"></div><div class="c" style="left:673px;width:64px">PR</div><div class="c" style="left:737px;width:64px">Lapa</div><div class="c" style="left:801px;width:64px">Mato preto</div><div class="c" style="left:865px;width:64px">Rural</div><div class="c" style="left:929px;width:64px"></div><div class="c n" style="left:993px;width:64px">-49,9851</div><div class="c n" style="left:1057px;width:64px">-25,9273</div><div class="c" style="left:1121px;width:128px">Obtido pelo GPS ou informado explicitamente</div><div class="c" style="left:1249px;width:64px">fused</div><div class="c" style="left:1313px;width:64px">18.5</div><div class="c n" style="left:1377px;width:64px">18,5</div><div class="c" style="left:1441px;width:64px">"Rural"</div><div class="c" style="left:1505px;width:128px">"Nenhum"</div><div class="c" style="left:1633px;width:64px"></div><div class="c" style="left:1697px;width:64px"></div><div class="c" style="left:1761px;width:64px"></div><div class="c" style="left:1825px;width:64px"></div><div class="c" style="left:1889px;width:9px;border-right:0"></div></div>
<div class="row" style="top:409px;height:19px"><div class="c n" style="left:33px;width:64px">9703</div><div class="c" style="left:97px;width:62px">06/02/2020</div><div class="c n sel" style="left:161px;width:64px">9986</div><div class="c" style="left:225px;width:64px">Macaco/Gorila</div><div class="c" style="left:289px;width:192px">2020-02-06T16:05:38</div><div class="c" style="left:481px;width:64px">Apps pelo celular</div><div class="c n" style="left:545px;width:64px">1</div><div class="c" style="left:609px;width:64px"></div><div class="c" style="left:673px;width:64px">DF</div><div class="c" style="left:737px;width:64px">Brasília</div><div class="c" style="left:801px;width:64px">SRTVN</div><div class="c" style="left:865px;width:128px">Plano Piloto de Brasília</div><div class="c n" style="left:993px;width:64px">-47,8903</div><div class="c n" style="left:1057px;width:64px">-15,7838</div><div class="c" style="left:1121px;width:192px">Obtido pelo GPS ou informado explicitamente</div><div class="c" style="left:1313px;width:64px">65.0</div><div class="c n" style="left:1377px;width:64px">65</div><div class="c" style="left:1441px;width:64px">"Rural", "Urbano"</div><div class="c" style="left:1505px;width:128px">"Nenhum"</div><div class="c" style="left:1633px;width:64px"></div><div class="c" style="left:1697px;width:64px"></div><div class="c" style="left:1761px;width:64px"></div><div class="c" style="left:1825px;width:64px"></div><div class="c" style="left:1889px;width:9px;border-right:0"></div></div>
<div class="row" style="top:429px;height:19px"><div class="c n" style="left:33px;width:64px">9702</div><div class="c" style="left:97px;width:62px">06/02/2020</div><div class="c n sel" style="left:161px;width:64px">9985</div><div class="c" style="left:225px;width:64px">Macaco/Gorila</div><div class="c" style="left:289px;width:64px">2020-02-06T12:00:00</div><div class="c" style="left:353px;width:64px">frutíferas</div><div class="c" style="left:417px;width:64px"></div><div class="c" style="left:481px;width:64px">Apps pelo celular</div><div class="c n" style="left:545px;width:64px">1</div><div class="c" style="left:609px;width:64px"></div><div class="c" style="left:673px;width:64px">PR</div><div class="c" style="left:737px;width:64px">Campo Largo</div><div class="c" style="left:801px;width:64px">Rua 15 de Novembro</div><div class="c" style="left:865px;width:128px">Jardim Itaqui</div><div class="c n" style="left:993px;width:64px">-49,5669</div><div class="c n" style="left:1057px;width:64px">-25,5255</div><div class="c" style="left:1121px;width:128px">Obtido pelo GPS ou informado explicitamente</div><div class="c" style="left:1249px;width:64px">fused</div><div class="c" style="left:1313px;width:64px">3.9</div><div class="c n" style="left:1377px;width:64px">3,9</div><div class="c" style="left:1441px;width:64px">"Rural"</div><div class="c" style="left:1505px;width:128px">"Avanço agropecuário"</div><div class="c" style="left:1633px;width:128px">"Propriedade particular"</div><div class="c" style="left:1761px;width:64px">"Grãos"</div><div class="c" style="left:1825px;width:64px"></div><div class="c" style="left:1889px;width:9px;border-right:0">"</div></div>
<div class="row" style="top:449px;height:19px"><div class="c n" style="left:33px;width:64px">9701</div><div class="c" style="left:97px;width:62px">06/02/2020</div><div class="c n sel" style="left:161px;width:64px">9984</div><div class="c" style="left:225px;width:64px">Macaco/Gorila</div><div class="c" style="left:289px;width:192px">2020-02-06T16:40:26</div><div class="c" style="left:481px;width:64px">Aplicação Web</div><div class="c n" style="left:545px;width:64px">3</div><div class="c" style="left:609px;width:64px">89107-000</div><div class="c" style="left:673px;width:64px">SC</div><div class="c" style="left:737px;width:64px">Pomerode</div><div class="c" style="left:801px;width:64px">Afonso Strelow</div><div class="c" style="left:865px;width:128px">Wunderwald</div><div class="c n" style="left:993px;width:64px">-49,1566</div><div class="c n" style="left:1057px;width:64px">-26,7456</div><div class="c" style="left:1121px;width:320px">Obtido pelo GPS ou informado explicitamente</div><div class="c" style="left:1441px;width:64px">"Próximo a Unidade"</div><div class="c" style="left:1505px;width:128px">"Nenhum"</div><div class="c" style="left:1633px;width:64px"></div><div class="c" style="left:1697px;width:64px"></div><div class="c" style="left:1761px;width:64px"></div><div class="c" style="left:1825px;width:64px"></div><div class="c" style="left:1889px;width:9px;border-right:0"></div></div>
<div class="row" style="top:469px;height:19px"><div class="c n" style="left:33px;width:64px">9700</div><div class="c" style="left:97px;width:62px">06/02/2020</div><div class="c n sel" style="left:161px;width:64px">9983</div><div class="c" style="left:225px;width:64px">Macaco/Gorila</div><div class="c" style="left:289px;width:192px">2020-02-06T15:12:38</div><div class="c" style="left:481px;width:64px">Apps pelo celular</div><div class="c n" style="left:545px;width:64px">2</div><div class="c" style="left:609px;width:64px"></div><div class="c" style="left:673px;width:64px">PR</div><div class="c" style="left:737px;width:64px">Paulo Frontin</div><div class="c" style="left:801px;width:64px">zona rural</div><div class="c" style="left:865px;width:128px">linha Iguaçu</div><div class="c n" style="left:993px;width:64px">-50,763</div><div class="c n" style="left:1057px;width:64px">-26,0351</div><div class="c" style="left:1121px;width:128px">Obtido pelo GPS ou informado explicitamente</div><div class="c" style="left:1249px;width:64px">fused</div><div class="c n" style="left:1313px;width:64px">5.428</div><div class="c n" style="left:1377px;width:64px">5,428</div><div class="c" style="left:1441px;width:64px">"Rural"</div><div class="c" style="left:1505px;width:128px">"Nenhum"</div><div class="c" style="left:1633px;width:64px"></div><div class="c" style="left:1697px;width:64px"></div><div class="c" style="left:1761px;width:64px"></div><div class="c" style="left:1825px;width:64px"></div><div class="c" style="left:1889px;width:9px;border-right:0"></div></div>
<div class="row" style="top:489px;height:19px"><div class="c n" style="left:33px;width:64px">9699</div><div class="c" style="left:97px;width:62px">06/02/2020</div><div class="c n sel" style="left:161px;width:64px">9982</div><div class="c" style="left:225px;width:64px">Macaco/Gorila</div><div class="c" style="left:289px;width:192px">2020-02-06T15:02:40</div><div class="c" style="left:481px;width:64px">Apps pelo celular</div><div class="c n" style="left:545px;width:64px">3</div><div class="c" style="left:609px;width:64px"></div><div class="c" style="left:673px;width:64px">PR</div><div class="c" style="left:737px;width:64px">Paulo Frontin</div><div class="c" style="left:801px;width:64px">zona rural</div><div class="c" style="left:865px;width:128px">Linha Iguaçu</div><div class="c n" style="left:993px;width:64px">-50,7631</div><div class="c n" style="left:1057px;width:64px">-26,0354</div><div class="c" style="left:1121px;width:128px">Obtido pelo GPS ou informado explicitamente</div><div class="c" style="left:1249px;width:64px">fused</div><div class="c" style="left:1313px;width:64px">4.4</div><div class="c n" style="left:1377px;width:64px">4,4</div><div class="c" style="left:1441px;width:64px">"Rural"</div><div class="c" style="left:1505px;width:128px">"Nenhum"</div><div class="c" style="left:1633px;width:64px"></div><div class="c" style="left:1697px;width:64px"></div><div class="c" style="left:1761px;width:64px"></div><div class="c" style="left:1825px;width:64px"></div><div class="c" style="left:1889px;width:9px;border-right:0"></div></div>
<div class="row" style="top:509px;height:19px"><div class="c n" style="left:33px;width:64px">9698</div><div class="c" style="left:97px;width:62px">06/02/2020</div><div class="c n sel" style="left:161px;width:64px">9981</div><div class="c" style="left:225px;width:64px">Macaco/Gorila</div><div class="c" style="left:289px;width:192px">2020-02-06T14:45:56</div><div class="c" style="left:481px;width:64px">Apps pelo celular</div><div class="c n" style="left:545px;width:64px">1</div><div class="c" style="left:609px;width:64px">83860-000</div><div class="c" style="left:673px;width:64px">PR</div><div class="c" style="left:737px;width:64px">Piên</div><div class="c" style="left:801px;width:128px">Unnamed Road</div><div class="c" style="left:929px;width:64px"></div><div class="c n" style="left:993px;width:64px">-49,4474</div><div class="c n" style="left:1057px;width:64px">-26,1284</div><div class="c" style="left:1121px;width:128px">Obtido pelo GPS ou informado explicitamente</div><div class="c" style="left:1249px;width:64px">Informado</div><div class="c" style="left:1313px;width:64px">-1.0</div><div class="c n" style="left:1377px;width:64px">-1</div><div class="c" style="left:1441px;width:64px">"Natural", "Rural"</div><div class="c" style="left:1505px;width:128px">"Nenhum"</div><div class="c" style="left:1633px;width:128px">"Comunidade rural"</div><div class="c" style="left:1761px;width:64px">"Grãos"</div><div class="c" style="left:1825px;width:64px"></div><div class="c" style="left:1889px;width:9px;border-right:0">"</div></div>
<div class="row" style="top:529px;height:19px"><div class="c n" style="left:33px;width:64px">9697</div><div class="c" style="left:97px;width:62px">06/02/2020</div><div class="c n sel" style="left:161px;width:64px">9980</div><div class="c" style="left:225px;width:64px">Não identificado</div><div class="c" style="left:289px;width:64px">2020-02-06T12:00:00</div><div class="c" style="left:353px;width:128px">próximo centro</div><div class="c" style="left:481px;width:64px">Apps pelo celular</div><div class="c n" style="left:545px;width:64px">1</div><div class="c" style="left:609px;width:64px"></div><div class="c" style="left:673px;width:64px">SC</div><div class="c" style="left:737px;width:64px">Seara</div><div class="c" style="left:801px;width:64px">Seara</div><div class="c" style="left:865px;width:128px">centro camara Vereadores</div><div class="c n" style="left:993px;width:64px">-52,3092</div><div class="c n" style="left:1057px;width:64px">-27,1495</div><div class="c" style="left:1121px;width:192px">Coordenadas obtidas a partir do endereço</div><div class="c" style="left:1313px;width:64px">-1.0</div><div class="c n" style="left:1377px;width:64px">-1</div><div class="c" style="left:1441px;width:64px">"Urbano"</div><div class="c" style="left:1505px;width:128px">"Nenhum"</div><div class="c" style="left:1633px;width:64px">"Terra do governo"</div><div class="c" style="left:1697px;width:128px">orgao publico</div><div class="c" style="left:1825px;width:64px"></div><div class="c" style="left:1889px;width:9px;border-right:0"></div></div>
<div class="row" style="top:549px;height:19px"><div class="c n" style="left:33px;width:64px">9696</div><div class="c" style="left:97px;width:62px">06/02/2020</div><div class="c n sel" style="left:161px;width:64px">9979</div><div class="c" style="left:225px;width:64px">Macaco/Gorila</div><div class="c" style="left:289px;width:192px">2020-02-06T14:27:43</div><div class="c" style="left:481px;width:64px">Apps pelo celular</div><div class="c n" style="left:545px;width:64px">1</div><div class="c" style="left:609px;width:64px">83860-000</div><div class="c" style="left:673px;width:64px">PR</div><div class="c" style="left:737px;width:64px">Agudos do Sul</div><div class="c" style="left:801px;width:128px">Unnamed Road</div><div class="c" style="left:929px;width:64px"></div><div class="c n" style="left:993px;width:64px">-49,383</div><div class="c n" style="left:1057px;width:64px">-26,063</div><div class="c" style="left:1121px;width:128px">Obtido pelo GPS ou informado explicitamente</div><div class="c" style="left:1249px;width:64px">Informado</div><div class="c" style="left:1313px;width:64px">-1.0</div><div class="c n" style="left:1377px;width:64px">-1</div><div class="c" style="left:1441px;width:64px">"Natural", "Rural"</div><div class="c" style="left:1505px;width:128px">"Nenhum"</div><div class="c" style="left:1633px;width:128px">"Comunidade rural", "Outras"</div><div class="c" style="left:1761px;width:128px">"Nenhuma"</div><div class="c" style="left:1889px;width:9px;border-right:0">"</div></div>
<div class="row" style="top:569px;height:19px"><div class="c n" style="left:33px;width:64px">9695</div><div class="c" style="left:97px;width:62px">06/02/2020</div><div class="c n sel" style="left:161px;width:64px">9978</div><div class="c" style="left:225px;width:64px">Outro</div><div class="c" style="left:289px;width:192px">2020-02-06T14:26:51</div><div class="c" style="left:481px;width:64px">Apps pelo celular</div><div class="c n" style="left:545px;width:64px">1</div><div class="c" style="left:609px;width:64px"></div><div class="c" style="left:673px;width:64px">MG</div><div class="c" style="left:737px;width:64px">Juiz de Fora</div><div class="c" style="left:801px;width:64px">Rua Viçosa</div><div class="c" style="left:865px;width:128px">Democrata</div><div class="c n" style="left:993px;width:64px">-43,3652</div><div class="c n" style="left:1057px;width:64px">-21,7474</div><div class="c" style="left:1121px;width:128px">Obtido pelo GPS ou informado explicitamente</div><div class="c" style="left:1249px;width:64px">fused</div><div class="c" style="left:1313px;width:64px">10.0</div><div class="c n" style="left:1377px;width:64px">10</div><div class="c" style="left:1441px;width:64px">"Urbano"</div><div class="c" style="left:1505px;width:128px">"Nenhum"</div><div class="c" style="left:1633px;width:64px">"Outras"</div><div class="c" style="left:1697px;width:64px">meio urbano</div><div class="c" style="left:1761px;width:128px">"Nenhuma"</div><div class="c" style="left:1889px;width:9px;border-right:0">"</div></div>
<div class="row" style="top:589px;height:19px"><div class="c n" style="left:33px;width:64px">9694</div><div class="c" style="left:97px;width:62px">06/02/2020</div><div class="c n sel" style="left:161px;width:64px">9977</div><div class="c" style="left:225px;width:64px">Macaco/Gorila</div><div class="c" style="left:289px;width:192px">2020-02-06T14:24:19</div><div class="c" style="left:481px;width:64px">Apps pelo celular</div><div class="c n" style="left:545px;width:64px">1</div><div class="c" style="left:609px;width:64px">83860-000</div><div class="c" style="left:673px;width:64px">PR</div><div class="c" style="left:737px;width:64px">Piên</div><div class="c" style="left:801px;width:128px">Unnamed Road</div><div class="c" style="left:929px;width:64px"></div><div class="c n" style="left:993px;width:64px">-49,5006</div><div class="c n" style="left:1057px;width:64px">-26,0467</div><div class="c" style="left:1121px;width:128px">Obtido pelo GPS ou informado explicitamente</div><div class="c" style="left:1249px;width:64px">Informado</div><div class="c" style="left:1313px;width:64px">-1.0</div><div class="c n" style="left:1377px;width:64px">-1</div><div class="c" style="left:1441px;width:64px">"Próximo a Unidade"</div><div class="c" style="left:1505px;width:128px">"Nenhum"</div><div class="c" style="left:1633px;width:128px">"Comunidade rural"</div><div class="c" style="left:1761px;width:128px">"Nenhuma"</div><div class="c" style="left:1889px;width:9px;border-right:0">"</div></div>
<div class="row" style="top:609px;height:19px"><div class="c n" style="left:33px;width:64px">9693</div><div class="c" style="left:97px;width:62px">06/02/2020</div><div class="c n sel" style="left:161px;width:64px">9976</div><div class="c" style="left:225px;width:64px">Macaco/Gorila</div><div class="c" style="left:289px;width:192px">2020-02-06T13:49:59</div><div class="c" style="left:481px;width:64px">Apps pelo celular</div><div class="c n" style="left:545px;width:64px">3</div><div class="c" style="left:609px;width:64px"></div><div class="c" style="left:673px;width:64px">SC</div><div class="c" style="left:737px;width:64px">São Bento do Sul</div><div class="c" style="left:801px;width:64px">Estrada Rio Represo</div><div class="c" style="left:865px;width:128px">Rio Represo</div><div class="c n" style="left:993px;width:64px">-49,3638</div><div class="c n" style="left:1057px;width:64px">-26,2012</div><div class="c" style="left:1121px;width:128px">Obtido pelo GPS ou informado explicitamente</div><div class="c" style="left:1249px;width:64px">fused</div><div class="c" style="left:1313px;width:64px">7.27</div><div class="c n" style="left:1377px;width:64px">7,27</div><div class="c" style="left:1441px;width:64px">"Natural", "Rural"</div><div class="c" style="left:1505px;width:128px">"Grandes obras: Estradas"</div><div class="c" style="left:1633px;width:128px">"Propriedade particular"</div><div class="c" style="left:1761px;width:128px">"Nenhuma"</div><div class="c" style="left:1889px;width:9px;border-right:0">"</div></div>
<div class="row" style="top:629px;height:19px"><div class="c n" style="left:33px;width:64px">9692</div><div class="c" style="left:97px;width:62px">06/02/2020</div><div class="c n sel" style="left:161px;width:64px">9975</div><div class="c" style="left:225px;width:64px">Macaco/Gorila</div><div class="c" style="left:289px;width:192px">2020-02-06T13:50:25</div><div class="c" style="left:481px;width:64px">Apps pelo celular</div><div class="c n" style="left:545px;width:64px">2</div><div class="c" style="left:609px;width:64px"></div><div class="c" style="left:673px;width:64px">SC</div><div class="c" style="left:737px;width:64px">São José do Cerrito</div><div class="c" style="left:801px;width:64px">entrada pelo</div><div class="c" style="left:865px;width:64px">interior</div><div class="c" style="left:929px;width:64px"></div><div class="c n" style="left:993px;width:64px">-50,604</div><div class="c n" style="left:1057px;width:64px">-27,6309</div><div class="c" style="left:1121px;width:256px">Coordenadas obtidas a partir do endereço</div><div class="c" style="left:1377px;width:64px"></div><div class="c" style="left:1441px;width:64px">"Rural"</div><div class="c" style="left:1505px;width:128px">"Nenhum"</div><div class="c" style="left:1633px;width:64px"></div><div class="c" style="left:1697px;width:64px"></div><div class="c" style="left:1761px;width:64px"></div><div class="c" style="left:1825px;width:64px"></div><div class="c" style="left:1889px;width:9px;border-right:0"></div></div>
<div class="row" style="top:649px;height:19px"><div class="c n" style="left:33px;width:64px">9690</div><div class="c" style="left:97px;width:62px">06/02/2020</div><div class="c n sel" style="left:161px;width:64px">9973</div><div class="c" style="left:225px;width:64px">Macaco/Gorila</div><div class="c" style="left:289px;width:64px">2020-02-06T12:00:00</div><div class="c" style="left:353px;width:128px">Chácara Oliveira.</div><div class="c" style="left:481px;width:64px">Apps pelo celular</div><div class="c n" style="left:545px;width:64px">1</div><div class="c" style="left:609px;width:64px"></div><div class="c" style="left:673px;width:64px">PR</div><div class="c" style="left:737px;width:64px">Contenda</div><div class="c" style="left:801px;width:64px">chácara Oliveira</div><div class="c" style="left:865px;width:64px">Cardoso II</div><div class="c" style="left:929px;width:64px"></div><div class="c n" style="left:993px;width:64px">-49,574</div><div class="c n" style="left:1057px;width:64px">-25,7744</div><div class="c" style="left:1121px;width:128px">Obtido pelo GPS ou informado explicitamente</div><div class="c" style="left:1249px;width:64px">fused</div><div class="c" style="left:1313px;width:64px">12.5</div><div class="c n" style="left:1377px;width:64px">12,5</div><div class="c" style="left:1441px;width:64px">"Natural", "Rural"</div><div class="c" style="left:1505px;width:128px">"Nenhum"</div><div class="c" style="left:1633px;width:128px">"Propriedade particular"</div><div class="c" style="left:1761px;width:64px">"Grãos"</div><div class="c" style="left:1825px;width:64px"></div><div class="c" style="left:1889px;width:9px;border-right:0">"</div></div>
<div class="row" style="top:669px;height:19px"><div class="c n" style="left:33px;width:64px">9689</div><div class="c" style="left:97px;width:62px">06/02/2020</div><div class="c n sel" style="left:161px;width:64px">9972</div><div class="c" style="left:225px;width:64px">Anfíbio: Perereca</div><div class="c" style="left:289px;width:192px">2020-02-06T12:17:55</div><div class="c" style="left:481px;width:64px">Apps pelo celular</div><div class="c n" style="left:545px;width:64px">4</div><div class="c" style="left:609px;width:64px"></div><div class="c" style="left:673px;width:64px">RJ</div><div class="c" style="left:737px;width:64px">Petrópolis</div><div class="c" style="left:801px;width:64px">Parque Nacional</div><div class="c" style="left:865px;width:64px">Bonfim</div><div class="c" style="left:929px;width:64px"></div><div class="c n" style="left:993px;width:64px">-43,0945</div><div class="c n" style="left:1057px;width:64px">-22,462</div><div class="c" style="left:1121px;width:256px">Coordenadas obtidas a partir do endereço</div><div class="c" style="left:1377px;width:64px"></div><div class="c" style="left:1441px;width:64px">"Natural"</div><div class="c" style="left:1505px;width:128px">"Nenhum"</div><div class="c" style="left:1633px;width:128px">"Unidade de conservação"</div><div class="c" style="left:1761px;width:128px">"Nenhuma"</div><div class="c" style="left:1889px;width:9px;border-right:0">"</div></div>
<div class="row" style="top:689px;height:19px"><div class="c n" style="left:33px;width:64px">9688</div><div class="c" style="left:97px;width:62px">06/02/2020</div><div class="c n sel" style="left:161px;width:64px">9971</div><div class="c" style="left:225px;width:64px">Macaco/Gorila</div><div class="c" style="left:289px;width:192px">2020-02-06T12:22:12</div><div class="c" style="left:481px;width:64px">Apps pelo celular</div><div class="c n" style="left:545px;width:64px">1</div><div class="c" style="left:609px;width:64px"></div><div class="c" style="left:673px;width:64px">SC</div><div class="c" style="left:737px;width:64px">Mafra</div><div class="c" style="left:801px;width:64px"></div><div class="c" style="left:865px;width:64px"></div><div class="c" style="left:929px;width:64px"></div><div class="c n" style="left:993px;width:64px">-49,7041</div><div class="c n" style="left:1057px;width:64px">-26,232</div><div class="c" style="left:1121px;width:320px">Obtido pelo GPS ou informado explicitamente</div><div class="c" style="left:1441px;width:64px">"Rural"</div><div class="c" style="left:1505px;width:128px">"Desmatamento"</div><div class="c" style="left:1633px;width:64px"></div><div class="c" style="left:1697px;width:64px"></div><div class="c" style="left:1761px;width:64px"></div><div class="c" style="left:1825px;width:64px"></div><div class="c" style="left:1889px;width:9px;border-right:0"></div></div>
<div class="row" style="top:709px;height:19px"><div class="c n" style="left:33px;width:64px">9687</div><div class="c" style="left:97px;width:62px">06/02/2020</div><div class="c n sel" style="left:161px;width:64px">9970</div><div class="c" style="left:225px;width:64px">Macaco/Gorila</div><div class="c" style="left:289px;width:192px">2020-02-06T10:55:29</div><div class="c" style="left:481px;width:64px">Apps pelo celular</div><div class="c n" style="left:545px;width:64px">1</div><div class="c" style="left:609px;width:64px"></div><div class="c" style="left:673px;width:64px">SC</div><div class="c" style="left:737px;width:64px">São José dos Pinhais</div><div class="c" style="left:801px;width:64px">Rua Anacleto</div><div class="c" style="left:865px;width:64px">Centro</div><div class="c" style="left:929px;width:64px"></div><div class="c n" style="left:993px;width:64px">-50,5795</div><div class="c n" style="left:1057px;width:64px">-27,6619</div><div class="c" style="left:1121px;width:128px">Obtido pelo GPS ou informado explicitamente</div><div class="c" style="left:1249px;width:64px">fused</div><div class="c" style="left:1313px;width:64px">3.90</div><div class="c n" style="left:1377px;width:64px">3,9</div><div class="c" style="left:1441px;width:64px">"Rural"</div><div class="c" style="left:1505px;width:128px">"Nenhum"</div><div class="c" style="left:1633px;width:64px"></div><div class="c" style="left:1697px;width:64px"></div><div class="c" style="left:1761px;width:64px"></div><div class="c" style="left:1825px;width:64px"></div><div class="c" style="left:1889px;width:9px;border-right:0"></div></div>
<div class="row" style="top:729px;height:19px"><div class="c n" style="left:33px;width:64px">9686</div><div class="c" style="left:97px;width:62px">06/02/2020</div><div class="c n sel" style="left:161px;width:64px">9969</div><div class="c" style="left:225px;width:64px">Macaco/Gorila</div><div class="c" style="left:289px;width:192px">2020-02-06T10:51:30</div><div class="c" style="left:481px;width:64px">Apps pelo celular</div><div class="c n" style="left:545px;width:64px">1</div><div class="c" style="left:609px;width:64px">88570-000</div><div class="c" style="left:673px;width:64px">SC</div><div class="c" style="left:737px;width:64px">São José dos Pinhais</div><div class="c" style="left:801px;width:128px">Unnamed Road</div><div class="c" style="left:929px;width:64px"></div><div class="c n" style="left:993px;width:64px">-50,5843</div><div class="c n" style="left:1057px;width:64px">-27,6743</div><div class="c" style="left:1121px;width:128px">Obtido pelo GPS ou informado explicitamente</div><div class="c" style="left:1249px;width:64px">GoogleMaps</div><div class="c n" style="left:1313px;width:64px">0</div><div class="c n" style="left:1377px;width:64px">0</div><div class="c" style="left:1441px;width:64px">"Urbano"</div><div class="c" style="left:1505px;width:128px">"Queimadas/Incêndios"</div><div class="c" style="left:1633px;width:128px">"Comunidade rural"</div><div class="c" style="left:1761px;width:128px">"Não identificada"</div><div class="c" style="left:1889px;width:9px;border-right:0">"</div></div>
<div class="row" style="top:749px;height:19px"><div class="c n" style="left:33px;width:64px">9685</div><div class="c" style="left:97px;width:62px">06/02/2020</div><div class="c n sel" style="left:161px;width:64px">9968</div><div class="c" style="left:225px;width:64px">Macaco/Gorila</div><div class="c" style="left:289px;width:192px">2020-02-06T10:47:59</div><div class="c" style="left:481px;width:64px">Apps pelo celular</div><div class="c n" style="left:545px;width:64px">1</div><div class="c" style="left:609px;width:64px"></div><div class="c" style="left:673px;width:64px">SC</div><div class="c" style="left:737px;width:64px">São José dos Pinhais</div><div class="c" style="left:801px;width:64px">Rua Anacleto</div><div class="c" style="left:865px;width:64px">Centro</div><div class="c" style="left:929px;width:64px"></div><div class="c n" style="left:993px;width:64px">-50,5794</div><div class="c n" style="left:1057px;width:64px">-27,6619</div><div class="c" style="left:1121px;width:128px">Obtido pelo GPS ou informado explicitamente</div><div class="c" style="left:1249px;width:64px">fused</div><div class="c" style="left:1313px;width:64px">3.93</div><div class="c n" style="left:1377px;width:64px">3,93</div><div class="c" style="left:1441px;width:64px">"Rural"</div><div class="c" style="left:1505px;width:128px">"Nenhum"</div><div class="c" style="left:1633px;width:64px"></div><div class="c" style="left:1697px;width:64px"></div><div class="c" style="left:1761px;width:64px"></div><div class="c" style="left:1825px;width:64px"></div><div class="c" style="left:1889px;width:9px;border-right:0"></div></div>
<div class="row" style="top:769px;height:19px"><div class="c n" style="left:33px;width:64px">9684</div><div class="c" style="left:97px;width:62px">05/02/2020</div><div class="c n sel" style="left:161px;width:64px">9967</div><div class="c" style="left:225px;width:64px">Macaco/Gorila</div><div class="c" style="left:289px;width:192px">2020-02-05T11:28:47</div><div class="c" style="left:481px;width:64px">Aplicação Web</div><div class="c n" style="left:545px;width:64px">1</div><div class="c" style="left:609px;width:64px">89107-000</div><div class="c" style="left:673px;width:64px">SC</div><div class="c" style="left:737px;width:64px">Pomerode</div><div class="c" style="left:801px;width:64px">Rua Vale do Selke</div><div class="c" style="left:865px;width:128px">Testo Central</div><div class="c n" style="left:993px;width:64px">-49,1433</div><div class="c n" style="left:1057px;width:64px">-26,8176</div><div class="c" style="left:1121px;width:320px">Obtido pelo GPS ou informado explicitamente</div><div class="c" style="left:1441px;width:64px">"Próximo a Unidade"</div><div class="c" style="left:1505px;width:128px">"Nenhum"</div><div class="c" style="left:1633px;width:64px"></div><div class="c" style="left:1697px;width:64px"></div><div class="c" style="left:1761px;width:64px"></div><div class="c" style="left:1825px;width:64px"></div><div class="c" style="left:1889px;width:9px;border-right:0"></div></div>
<div class="row" style="top:789px;height:19px"><div class="c n" style="left:33px;width:64px">9683</div><div class="c" style="left:97px;width:62px">06/02/2020</div><div class="c n sel" style="left:161px;width:64px">9966</div><div class="c" style="left:225px;width:64px">Outro</div><div class="c" style="left:289px;width:192px">2020-02-06T09:56:25</div><div class="c" style="left:481px;width:64px">Apps pelo celular</div><div class="c n" style="left:545px;width:64px">1</div><div class="c" style="left:609px;width:64px"></div><div class="c" style="left:673px;width:64px">RJ</div><div class="c" style="left:737px;width:64px">Teresópolis</div><div class="c" style="left:801px;width:64px">Parque Nacional</div><div class="c" style="left:865px;width:64px">Soberbo</div><div class="c" style="left:929px;width:64px"></div><div class="c n" style="left:993px;width:64px">-42,9873</div><div class="c n" style="left:1057px;width:64px">-22,4566</div><div class="c" style="left:1121px;width:192px">Coordenadas obtidas a partir do endereço</div><div class="c" style="left:1313px;width:64px">-1.0</div><div class="c n" style="left:1377px;width:64px">-1</div><div class="c" style="left:1441px;width:64px">"Próximo a Unidade"</div><div class="c" style="left:1505px;width:128px">"Nenhum"</div><div class="c" style="left:1633px;width:64px"></div><div class="c" style="left:1697px;width:64px"></div><div class="c" style="left:1761px;width:64px"></div><div class="c" style="left:1825px;width:64px"></div><div class="c" style="left:1889px;width:9px;border-right:0"></div></div>
<div class="row" style="top:809px;height:19px"><div class="c n" style="left:33px;width:64px">9682</div><div class="c" style="left:97px;width:62px">06/02/2020</div><div class="c n sel" style="left:161px;width:64px">9965</div><div class="c" style="left:225px;width:64px">Macaco/Gorila</div><div class="c" style="left:289px;width:64px">2020-02-06T12:00:00</div><div class="c" style="left:353px;width:128px">Mata silvestre com lago</div><div class="c" style="left:481px;width:64px">Apps pelo celular</div><div class="c n" style="left:545px;width:64px">0</div><div class="c" style="left:609px;width:64px"></div><div class="c" style="left:673px;width:64px">PR</div><div class="c" style="left:737px;width:64px">Contenda</div><div class="c" style="left:801px;width:64px">chácara vale</div><div class="c" style="left:865px;width:128px">Colônia Santa Ana.</div><div class="c n" style="left:993px;width:64px">-49,5402</div><div class="c n" style="left:1057px;width:64px">-25,6793</div><div class="c" style="left:1121px;width:128px">Obtido pelo GPS ou informado explicitamente</div><div class="c" style="left:1249px;width:64px">fused</div><div class="c n" style="left:1313px;width:64px">22.967</div><div class="c n" style="left:1377px;width:64px">22,967</div><div class="c" style="left:1441px;width:64px">"Natural", "Rural"</div><div class="c" style="left:1505px;width:128px">"Nenhum"</div><div class="c" style="left:1633px;width:128px">"Propriedade particular"</div><div class="c" style="left:1761px;width:128px">"Biocombustível/Oleaginosas"</div><div class="c" style="left:1889px;width:9px;border-right:0">"</div></div>
<div class="row" style="top:829px;height:8px"><div class="c n" style="left:33px;width:64px">9681</div><div class="c" style="left:97px;width:62px">05/02/2020</div><div class="c n sel" style="left:161px;width:64px">9964</div><div class="c" style="left:225px;width:64px">Macaco/Gorila</div><div class="c" style="left:289px;width:64px">2020-02-05T12:00:00</div><div class="c" style="left:353px;width:64px">mata</div><div class="c" style="left:417px;width:64px"></div><div class="c" style="left:481px;width:64px">Apps pelo celular</div><div class="c n" style="left:545px;width:64px">0</div><div class="c" style="left:609px;width:64px"></div><div class="c" style="left:673px;width:64px">PR</div><div class="c" style="left:737px;width:64px">Antônio Olinto</div><div class="c" style="left:801px;width:64px">Invernadinha</div><div class="c" style="left:865px;width:128px">Santo Amaro da Mata</div><div class="c n" style="left:993px;width:64px">-50,1477</div><div class="c n" style="left:1057px;width:64px">-26,3337</div><div class="c" style="left:1121px;width:128px">Obtido pelo GPS ou informado explicitamente</div><div class="c" style="left:1249px;width:64px">fused</div><div class="c n" style="left:1313px;width:64px">6.333</div><div class="c n" style="left:1377px;width:64px">6,333</div><div class="c" style="left:1441px;width:64px">"Rural"</div><div class="c" style="left:1505px;width:128px">"Nenhum"</div><div class="c" style="left:1633px;width:64px"></div><div class="c" style="left:1697px;width:64px"></div><div class="c" style="left:1761px;width:64px"></div><div class="c" style="left:1825px;width:64px"></div><div class="c" style="left:1889px;width:9px;border-right:0"></div></div>
<div class="rhwrap"></div>
<div class="rh" style="top:129px;height:20px">1</div>
<div class="rh" style="top:149px;height:20px">2</div>
<div class="rh" style="top:169px;height:20px">3</div>
<div class="rh" style="top:189px;height:20px">4</div>
<div class="rh" style="top:209px;height:20px">5</div>
<div class="rh" style="top:229px;height:20px">6</div>
<div class="rh" style="top:249px;height:20px">7</div>
<div class="rh" style="top:269px;height:20px">8</div>
<div class="rh" style="top:289px;height:20px">9</div>
<div class="rh" style="top:309px;height:20px">10</div>
<div class="rh" style="top:329px;height:20px">11</div>
<div class="rh" style="top:349px;height:20px">12</div>
<div class="rh" style="top:369px;height:20px">13</div>
<div class="rh" style="top:389px;height:20px">14</div>
<div class="rh" style="top:409px;height:20px">15</div>
<div class="rh" style="top:429px;height:20px">16</div>
<div class="rh" style="top:449px;height:20px">17</div>
<div class="rh" style="top:469px;height:20px">18</div>
<div class="rh" style="top:489px;height:20px">19</div>
<div class="rh" style="top:509px;height:20px">20</div>
<div class="rh" style="top:529px;height:20px">21</div>
<div class="rh" style="top:549px;height:20px">22</div>
<div class="rh" style="top:569px;height:20px">23</div>
<div class="rh" style="top:589px;height:20px">24</div>
<div class="rh" style="top:609px;height:20px">25</div>
<div class="rh" style="top:629px;height:20px">26</div>
<div class="rh" style="top:649px;height:20px">27</div>
<div class="rh" style="top:669px;height:20px">28</div>
<div class="rh" style="top:689px;height:20px">29</div>
<div class="rh" style="top:709px;height:20px">30</div>
<div class="rh" style="top:729px;height:20px">31</div>
<div class="rh" style="top:749px;height:20px">32</div>
<div class="rh" style="top:769px;height:20px">33</div>
<div class="rh" style="top:789px;height:20px">34</div>
<div class="rh" style="top:809px;height:20px">35</div>
<div class="rh" style="top:829px;height:8px">36</div>
<div class="rhline"></div>
<div class="selL"></div>
<div class="abs" style="left:162px;top:148px;width:61px;height:1px;background:#d2d9d4"></div><div class="abs" style="left:162px;top:168px;width:61px;height:1px;background:#d2d9d4"></div><div class="abs" style="left:162px;top:188px;width:61px;height:1px;background:#d2d9d4"></div><div class="abs" style="left:162px;top:208px;width:61px;height:1px;background:#d2d9d4"></div><div class="abs" style="left:162px;top:228px;width:61px;height:1px;background:#d2d9d4"></div><div class="abs" style="left:162px;top:248px;width:61px;height:1px;background:#d2d9d4"></div><div class="abs" style="left:162px;top:268px;width:61px;height:1px;background:#d2d9d4"></div><div class="abs" style="left:162px;top:288px;width:61px;height:1px;background:#d2d9d4"></div><div class="abs" style="left:162px;top:308px;width:61px;height:1px;background:#d2d9d4"></div><div class="abs" style="left:162px;top:328px;width:61px;height:1px;background:#d2d9d4"></div><div class="abs" style="left:162px;top:348px;width:61px;height:1px;background:#d2d9d4"></div><div class="abs" style="left:162px;top:368px;width:61px;height:1px;background:#d2d9d4"></div><div class="abs" style="left:162px;top:388px;width:61px;height:1px;background:#d2d9d4"></div><div class="abs" style="left:162px;top:408px;width:61px;height:1px;background:#d2d9d4"></div><div class="abs" style="left:162px;top:428px;width:61px;height:1px;background:#d2d9d4"></div><div class="abs" style="left:162px;top:448px;width:61px;height:1px;background:#d2d9d4"></div><div class="abs" style="left:162px;top:468px;width:61px;height:1px;background:#d2d9d4"></div><div class="abs" style="left:162px;top:488px;width:61px;height:1px;background:#d2d9d4"></div><div class="abs" style="left:162px;top:508px;width:61px;height:1px;background:#d2d9d4"></div><div class="abs" style="left:162px;top:528px;width:61px;height:1px;background:#d2d9d4"></div><div class="abs" style="left:162px;top:548px;width:61px;height:1px;background:#d2d9d4"></div><div class="abs" style="left:162px;top:568px;width:61px;height:1px;background:#d2d9d4"></div><div class="abs" style="left:162px;top:588px;width:61px;height:1px;background:#d2d9d4"></div><div class="abs" style="left:162px;top:608px;width:61px;height:1px;background:#d2d9d4"></div><div class="abs" style="left:162px;top:628px;width:61px;height:1px;background:#d2d9d4"></div><div class="abs" style="left:162px;top:648px;width:61px;height:1px;background:#d2d9d4"></div><div class="abs" style="left:162px;top:668px;width:61px;height:1px;background:#d2d9d4"></div><div class="abs" style="left:162px;top:688px;width:61px;height:1px;background:#d2d9d4"></div><div class="abs" style="left:162px;top:708px;width:61px;height:1px;background:#d2d9d4"></div><div class="abs" style="left:162px;top:728px;width:61px;height:1px;background:#d2d9d4"></div><div class="abs" style="left:162px;top:748px;width:61px;height:1px;background:#d2d9d4"></div><div class="abs" style="left:162px;top:768px;width:61px;height:1px;background:#d2d9d4"></div><div class="abs" style="left:162px;top:788px;width:61px;height:1px;background:#d2d9d4"></div><div class="abs" style="left:162px;top:808px;width:61px;height:1px;background:#d2d9d4"></div><div class="abs" style="left:162px;top:828px;width:61px;height:1px;background:#d2d9d4"></div>
<div class="abs" style="left:0;top:110px;width:33px;height:18px;border-right:1px solid #d6d6d6"></div>
<svg class="abs" style="left:0;top:105px" width="33" height="25"><polygon points="28.7,8 28.7,20 16.8,20" fill="#bdbdbd"/></svg>
<div class="abs" style="left:159px;top:110px;width:3px;height:18px;background:#fff"></div><div class="abs" style="left:158px;top:110px;width:1px;height:18px;background:#a8a8a8"></div>
<div class="abs" style="left:0;top:837px;width:1901px;height:17px;background:#f3f3f3"></div>
<div class="abs" style="left:1898px;top:129px;width:3px;height:708px;background:#e6e6e6"></div><div class="abs" style="left:1899px;top:138px;width:2px;height:3px;background:#8a8a8a"></div><div class="abs" style="left:1899px;top:826px;width:2px;height:3px;background:#8a8a8a"></div>
<div class="abs" style="left:33px;top:837px;width:1868px;height:12px;background:#e6e6e6"></div>
<svg class="abs" style="left:33px;top:837px" width="1865" height="12"><polygon points="12.5,1.8 12.5,10 6,5.9" fill="#8a8a8a"/><rect x="20" y="3" width="275" height="6" rx="3" fill="#8a8a8a"/><polygon points="1854,1.8 1854,10 1860.5,5.9" fill="#8a8a8a"/></svg>
<div class="selR"></div>
</body></html>
